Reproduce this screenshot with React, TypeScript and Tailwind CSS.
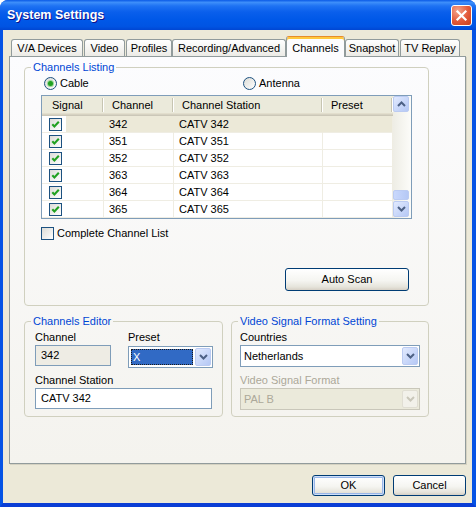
import type { ReactNode } from 'react';
import clsx from 'clsx';

const tabs = [
  { label: 'V/A Devices', cls: 'ml-[2px] w-[72px]' },
  { label: 'Video', cls: 'ml-[1px] w-[41px]' },
  { label: 'Profiles', cls: 'ml-[1px] w-[46px]' },
  { label: 'Recording/Advanced', cls: 'w-[114px]' },
  { label: 'Channels', cls: 'w-[59px]', active: true },
  { label: 'Snapshot', cls: 'w-[54px]' },
  { label: 'TV Replay', cls: 'ml-[1px] w-[60px]' },
];

const rows = [
  { ch: '342', station: 'CATV 342', selected: true },
  { ch: '351', station: 'CATV 351' },
  { ch: '352', station: 'CATV 352' },
  { ch: '363', station: 'CATV 363' },
  { ch: '364', station: 'CATV 364' },
  { ch: '365', station: 'CATV 365' },
];

function CheckBox({ checked }: { checked?: boolean }) {
  return (
    <span className="w-[13px] h-[13px] shrink-0 border border-[#1C5180] bg-linear-to-br from-[#DCDCD7] to-white flex items-center justify-center">
      {checked && (
        <svg width="11" height="11" viewBox="0 0 11 11">
          <path d="M2.3 5.2 L4.4 7.4 L8.8 2.8" stroke="#21A121" strokeWidth="2.1" fill="none" />
        </svg>
      )}
    </span>
  );
}

function Radio({ on }: { on?: boolean }) {
  return (
    <span className="w-[13px] h-[13px] shrink-0 rounded-full border border-[#1C5180] bg-linear-to-br from-[#DCDCD7] to-white flex items-center justify-center">
      {on && <span className="w-[5px] h-[5px] rounded-full bg-[#21A121] shadow-[0_0_0_1px_#9AD79A]" />}
    </span>
  );
}

function Chevron({ up, color = '#4D6185' }: { up?: boolean; color?: string }) {
  return (
    <svg width="9" height="6" viewBox="0 0 9 6">
      <path d={up ? 'M1 5 L4.5 1.5 L8 5' : 'M1 1 L4.5 4.5 L8 1'} stroke={color} strokeWidth="2" fill="none" />
    </svg>
  );
}

function ScrollButton({ up }: { up?: boolean }) {
  return (
    <span className="w-[16px] h-[16px] rounded-[2px] border border-[#BBCBF2] bg-linear-to-br from-[#E2EAFE] to-[#B5C8F5] flex items-center justify-center">
      <Chevron up={up} />
    </span>
  );
}

function DropButton({ disabled }: { disabled?: boolean }) {
  return (
    <span
      className={clsx(
        'w-[16px] shrink-0 rounded-[2px] border flex items-center justify-center',
        disabled
          ? 'border-[#E0DED3] bg-[#F2F1EA]'
          : 'border-[#BBCBF2] bg-linear-to-br from-[#E2EAFE] to-[#B5C8F5]'
      )}
    >
      <Chevron color={disabled ? '#C9C7BA' : '#4D6185'} />
    </span>
  );
}

function Combo({ className, disabled, children }: { className: string; disabled?: boolean; children: ReactNode }) {
  return (
    <div
      className={clsx(
        'h-[22px] border flex p-px',
        disabled ? 'border-[#C9C7BA] bg-[#EBEADB]' : 'border-[#7F9DB9] bg-white',
        className
      )}
    >
      <div className="flex-1 flex items-center min-w-0">{children}</div>
      <DropButton disabled={disabled} />
    </div>
  );
}

function XPButton({ children, isDefault, className }: { children: ReactNode; isDefault?: boolean; className: string }) {
  return (
    <button
      className={clsx(
        'h-[21px] rounded-[3px] border border-[#003C74] bg-[linear-gradient(to_bottom,#FFFFFF_0%,#F5F5F1_55%,#E6E4DB_85%,#D6D0C5_100%)] flex items-center justify-center',
        isDefault && 'shadow-[inset_0_0_0_1px_#CEDFF9,inset_0_0_0_2px_#99B6E8]',
        className
      )}
    >
      {children}
    </button>
  );
}

function Legend({ children }: { children: ReactNode }) {
  return <legend className="ml-[6px] px-[2px] leading-[14px] text-[#0046D5]">{children}</legend>;
}

function ChannelList() {
  return (
    <div className="ml-[16px] mt-[5px] w-[371px] border border-[#7F9DB9] bg-white flex">
      <div className="w-[351px] flex flex-col">
        <div className="h-[20px] flex bg-[#EBEADB] shadow-[inset_0_-1px_0_#CBC7B8,inset_0_-2px_0_#D6D2C2,inset_0_-3px_0_#E2DECD]">
          <div className="w-[62px] flex items-center pl-[10px] pb-[2px]">
            Signal<span className="ml-auto mr-px w-px h-[14px] bg-[#C7C5B2] shadow-[1px_0_0_white]" />
          </div>
          <div className="w-[70px] flex items-center pl-[8px] pb-[2px]">
            Channel<span className="ml-auto mr-px w-px h-[14px] bg-[#C7C5B2] shadow-[1px_0_0_white]" />
          </div>
          <div className="w-[149px] flex items-center pl-[8px] pb-[2px]">
            Channel Station<span className="ml-auto mr-px w-px h-[14px] bg-[#C7C5B2] shadow-[1px_0_0_white]" />
          </div>
          <div className="w-[70px] flex items-center pl-[8px] pb-[2px]">
            Preset<span className="ml-auto mr-px w-px h-[14px] bg-[#C7C5B2] shadow-[1px_0_0_white]" />
          </div>
        </div>
        {rows.map((r) => (
          <div key={r.ch} className={clsx('h-[17px] flex', r.selected && 'bg-[#ECE9D8]')}>
            <div
              className={clsx(
                'w-[62px] flex border-b border-r border-[#EFEDE3]',
                r.selected && 'border-r-transparent'
              )}
            >
              <span className="w-[24px] h-full bg-white flex items-center pl-[7px]">
                <CheckBox checked />
              </span>
            </div>
            <div className={clsx('w-[70px] flex items-center pl-[5px] border-b border-r border-[#EFEDE3]', r.selected && 'border-r-transparent')}>
              {r.ch}
            </div>
            <div className={clsx('w-[149px] flex items-center pl-[5px] border-b border-r border-[#EFEDE3]', r.selected && 'border-r-transparent')}>
              {r.station}
            </div>
            <div className="w-[70px] border-b border-r border-[#EFEDE3]" />
          </div>
        ))}
      </div>
      <div className="w-[18px] flex flex-col bg-linear-to-r from-[#EEEDE5] to-[#FCFCF9] pb-px">
        <ScrollButton up />
        <div className="flex-1" />
        <span className="w-[16px] h-[10px] mb-px rounded-[2px] border border-[#BBCBF2] bg-linear-to-r from-[#C9D8FC] to-[#B5C8F5]" />
        <ScrollButton />
      </div>
    </div>
  );
}

export default function App() {
  return (
    <div className="w-[476px] h-[507px] flex flex-col rounded-t-[8px] overflow-hidden bg-[#0553E5] font-['Liberation_Sans',Arial,sans-serif] text-[11px] text-black select-none">
      {/* title bar */}
      <div className="h-[30px] shrink-0 flex items-center pl-[7px] pr-[4px] bg-[linear-gradient(to_bottom,#0A5AE6_0%,#3D8EFA_8%,#1E72F3_20%,#0A5FEC_40%,#0058E8_65%,#0054E3_88%,#0046D3_100%)]">
        <span className="text-[12.5px] font-bold text-white [text-shadow:1px_1px_#0F1089]">System Settings</span>
        <span className="ml-auto w-[21px] h-[21px] rounded-[3px] border border-white bg-[radial-gradient(circle_at_30%_25%,#F4A48C_0%,#E2593A_55%,#C9401D_100%)] flex items-center justify-center">
          <svg width="13" height="13" viewBox="0 0 13 13">
            <path d="M2.5 2.5 L10.5 10.5 M10.5 2.5 L2.5 10.5" stroke="white" strokeWidth="2.2" strokeLinecap="square" />
          </svg>
        </span>
      </div>

      {/* client */}
      <div className="flex-1 flex flex-col bg-[#ECE9D8] border-l-[3px] border-r-[4px] border-b-[4px] border-[#0553E5] border-b-[#0A3DD5] px-[6px] pt-[6px]">
        <div className="h-[20px] flex items-end">
          {tabs.map((t) =>
            t.active ? (
              <div
                key={t.label}
                className={clsx(
                  'relative z-10 h-[21px] -mb-px flex items-center justify-center rounded-t-[3px] border border-b-0 border-[#919B9C] border-t-[#E68B2C] bg-[#FCFCFE] shadow-[inset_0_2px_0_#FFC83C] pt-[2px]',
                  t.cls
                )}
              >
                {t.label}
              </div>
            ) : (
              <div
                key={t.label}
                className={clsx(
                  'h-[17px] flex items-center justify-center rounded-t-[3px] border border-b-0 border-[#919B9C] bg-linear-to-b from-white to-[#ECEBE6]',
                  t.cls
                )}
              >
                {t.label}
              </div>
            )
          )}
        </div>

        <div className="h-[408px] flex flex-col border border-[#919B9C] bg-linear-to-b from-[#FCFCFE] to-[#F4F3EE] shadow-[1px_1px_0_#D5D2C2]">
          <fieldset className="ml-[14px] mt-[3px] w-[405px] h-[246px] min-w-0 border border-[#D0D0BF] rounded-[4px]">
            <Legend>Channels Listing</Legend>
            <div className="flex flex-col">
              <div className="h-[13px] mt-[3px] pl-[19px] flex items-center">
                <div className="w-[199px] flex items-center gap-[3px]">
                  <Radio on />
                  Cable
                </div>
                <div className="flex items-center gap-[3px]">
                  <Radio />
                  Antenna
                </div>
              </div>
              <ChannelList />
              <div className="h-[13px] mt-[8px] ml-[16px] flex items-center gap-[3px]">
                <CheckBox />
                Complete Channel List
              </div>
              <XPButton className="ml-[260px] mt-[28px] w-[124px] h-[23px]">Auto Scan</XPButton>
            </div>
          </fieldset>

          <div className="flex ml-[14px] mt-[8px] gap-[8px]">
            <fieldset className="w-[199px] h-[103px] min-w-0 border border-[#D0D0BF] rounded-[4px]">
              <Legend>Channels Editor</Legend>
              <div className="flex flex-col pl-[10px]">
                <div className="flex mt-[3px] leading-[13px]">
                  <span className="w-[93px]">Channel</span>
                  <span>Preset</span>
                </div>
                <div className="flex mt-[1px] h-[22px]">
                  <div className="w-[76px] h-[21px] mr-[17px] border border-[#7F9DB9] bg-[#EEECE4] flex items-center pl-[5px]">
                    342
                  </div>
                  <Combo className="w-[85px] mt-px h-[21px]">
                    <span className="h-[16px] w-[62px] ml-px bg-[#316AC5] text-white border border-dotted border-[#1A1A1A] flex items-center pl-px">
                      X
                    </span>
                  </Combo>
                </div>
                <span className="mt-[7px] leading-[13px]">Channel Station</span>
                <div className="mt-px w-[177px] h-[21px] border border-[#7F9DB9] bg-white flex items-center pl-[5px]">
                  CATV 342
                </div>
              </div>
            </fieldset>

            <fieldset className="w-[198px] h-[103px] min-w-0 border border-[#D0D0BF] rounded-[4px]">
              <Legend>Video Signal Format Setting</Legend>
              <div className="flex flex-col pl-[8px]">
                <span className="mt-[3px] leading-[13px]">Countries</span>
                <Combo className="mt-px w-[180px]">
                  <span className="pl-[2px]">Netherlands</span>
                </Combo>
                <span className="mt-[7px] leading-[13px] text-[#ACA899]">Video Signal Format</span>
                <Combo disabled className="mt-px w-[180px]">
                  <span className="pl-[2px] text-[#ACA899]">PAL B</span>
                </Combo>
              </div>
            </fieldset>
          </div>
        </div>

        <div className="flex justify-end gap-[8px] mt-[11px]">
          <XPButton isDefault className="w-[73px]">
            OK
          </XPButton>
          <XPButton className="w-[73px]">Cancel</XPButton>
        </div>
      </div>
    </div>
  );
}
